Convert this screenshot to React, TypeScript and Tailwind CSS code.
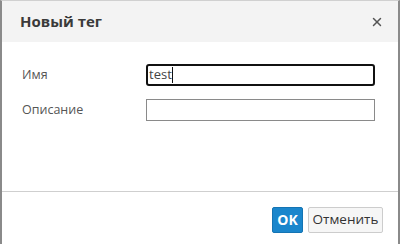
import { X } from 'lucide-react';

const App = () => {
  return (
    <div className="w-[401px] h-[244px] bg-white font-['Open_Sans',sans-serif]">
      <div className="w-[400px] h-[244px] flex flex-col border-l-2 border-r-2 border-t border-l-[#8a8a8a] border-r-[#8a8a8a] border-t-[#d0d0d0]">
        <div className="h-[41px] bg-[#f3f3f3] flex items-center justify-between pl-[18px] pr-[14px]">
          <h2 className="text-[15px] font-bold text-[#3a3a3a]">Новый тег</h2>
          <X className="w-[14px] h-[14px] text-[#555]" strokeWidth={2.5} />
        </div>
        <div className="flex-1 flex flex-col gap-[13px] pt-[22px] pl-[20px] pr-[23px]">
          <div className="flex items-center">
            <label className="w-[124px] text-[12.5px] text-[#555]">Имя</label>
            <div className="flex-1 h-[22px] border-2 border-[#111] rounded-[3px] flex items-center pl-[1px] text-[13px] text-[#444]">
              test<span className="w-px h-[16px] bg-[#111]"></span>
            </div>
          </div>
          <div className="flex items-center">
            <label className="w-[124px] text-[12.5px] text-[#555]">Описание</label>
            <div className="flex-1 h-[22px] border border-[#8a8a8a]"></div>
          </div>
        </div>
        <div className="h-[53px] border-t border-[#cfcfcf] flex items-center justify-end gap-[5px] pr-[15px] pt-[3px]">
          <button className="h-[26px] w-[31px] bg-[#1a86cc] border border-[#1474b3] text-white text-[14px] font-bold rounded-[2px]">
            OK
          </button>
          <button className="h-[26px] w-[75px] bg-[#f6f6f6] border border-[#cccccc] text-[#333] text-[13.5px] rounded-[2px]">
            Отменить
          </button>
        </div>
      </div>
    </div>
  );
};

export default App;
